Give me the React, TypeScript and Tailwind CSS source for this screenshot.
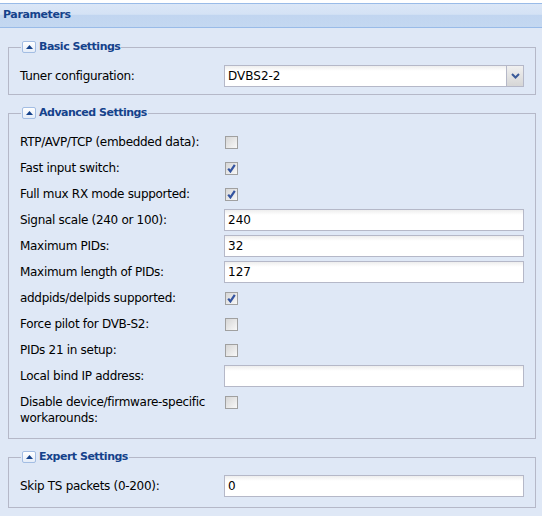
import React from 'react'

const font = { fontFamily: '"DejaVu Sans", Verdana, sans-serif' }

type Row =
  | { label: string; kind: 'check'; checked: boolean }
  | { label: string; kind: 'text'; value: string }

const advanced: Row[] = [
  { label: 'RTP/AVP/TCP (embedded data):', kind: 'check', checked: false },
  { label: 'Fast input switch:', kind: 'check', checked: true },
  { label: 'Full mux RX mode supported:', kind: 'check', checked: true },
  { label: 'Signal scale (240 or 100):', kind: 'text', value: '240' },
  { label: 'Maximum PIDs:', kind: 'text', value: '32' },
  { label: 'Maximum length of PIDs:', kind: 'text', value: '127' },
  { label: 'addpids/delpids supported:', kind: 'check', checked: true },
  { label: 'Force pilot for DVB-S2:', kind: 'check', checked: false },
  { label: 'PIDs 21 in setup:', kind: 'check', checked: false },
  { label: 'Local bind IP address:', kind: 'text', value: '' },
  { label: 'Disable device/firmware-specific workarounds:', kind: 'check', checked: false }
]

function Toggle() {
  return (
    <span className="flex h-[12px] w-[14px] items-center justify-center rounded-[2px] border border-[#a3bde3] bg-[linear-gradient(to_bottom,#ffffff,#e4ecf8)]">
      <svg width="7" height="4" viewBox="0 0 7 4">
        <path d="M0 4 L3.5 0 L7 4 Z" fill="#15428b" />
      </svg>
    </span>
  )
}

function FieldSet({ title, pb, children }: { title: string; pb: string; children: React.ReactNode }) {
  return (
    <fieldset className={`border border-[#b5b8c8] pl-[11px] pr-[11px] pt-[11px] ${pb}`}>
      <legend className="ml-[1px] flex h-[14px] items-center gap-[3px] px-[1px]">
        <Toggle />
        <span className="text-[11px] font-bold leading-[14px] text-[#15428b]" style={{ letterSpacing: '-0.5px' }}>
          {title}
        </span>
      </legend>
      <div className="flex flex-col gap-[4px]">{children}</div>
    </fieldset>
  )
}

function Label({ text }: { text: string }) {
  return (
    <div className="w-[204px] shrink-0 pr-[8px] pt-[3px] text-[12px] leading-[16px] tracking-[-0.3px] text-black">{text}</div>
  )
}

function TextBox({ value }: { value: string }) {
  return (
    <div className="flex h-[22px] w-[300px] items-center border border-[#b5b8c8] bg-[linear-gradient(to_bottom,#eeeeee,#ffffff_5px,#ffffff)] px-[3px] text-[12px] text-black">
      {value}
    </div>
  )
}

function Check({ checked }: { checked: boolean }) {
  return (
    <div className="flex h-[22px] items-center pl-[1px]">
      <div className="flex h-[13px] w-[13px] items-center justify-center border border-[#a0a0a0] bg-[linear-gradient(135deg,#d6d6d6,#f8f8f8)]">
        {checked && (
          <svg width="9" height="9" viewBox="0 0 9 9">
            <path d="M1.2 4.6 L3.4 7.4 L7.8 0.8" stroke="#3454a0" strokeWidth="2.2" fill="none" />
          </svg>
        )}
      </div>
    </div>
  )
}

function Combo({ value }: { value: string }) {
  return (
    <div className="flex h-[22px] w-[300px] border border-[#b5b8c8] bg-white">
      <div className="flex flex-1 items-center bg-[linear-gradient(to_bottom,#eeeeee,#ffffff_5px,#ffffff)] px-[3px] text-[12px] text-black">
        {value}
      </div>
      <div className="flex w-[17px] items-center justify-center border-l border-[#b5b8c8] bg-[linear-gradient(to_bottom,#f0f0f0,#d6d6d6)]">
        <svg width="9" height="6" viewBox="0 0 9 6">
          <path d="M1 1 L4.5 4.5 L8 1" stroke="#3a5a99" strokeWidth="2" fill="none" />
        </svg>
      </div>
    </div>
  )
}

export default function App() {
  return (
    <div className="h-[516px] w-[542px] overflow-hidden bg-white pt-[3px]" style={font}>
      <div className="flex h-[25px] items-center border-y border-[#99bbe8] bg-[linear-gradient(to_bottom,#dbe7f7_0%,#d4e2f5_45%,#c1d5f0_48%,#c4d8f1_100%)] pl-[3px]">
        <span className="text-[11px] font-bold text-[#15428b]" style={{ letterSpacing: '-0.4px' }}>Parameters</span>
      </div>
      <div className="flex h-full flex-col gap-[11px] bg-[#dfe8f6] pl-[8px] pr-[6px] pt-[12px]">
        <FieldSet title="Basic Settings" pb="pb-[7px]">
          <div className="flex">
            <Label text="Tuner configuration:" />
            <Combo value="DVBS2-2" />
          </div>
        </FieldSet>
        <FieldSet title="Advanced Settings" pb="pb-[12px]">
          {advanced.map((r) => (
            <div key={r.label} className="flex">
              <Label text={r.label} />
              {r.kind === 'check' ? <Check checked={r.checked} /> : <TextBox value={r.value} />}
            </div>
          ))}
        </FieldSet>
        <FieldSet title="Expert Settings" pb="pb-[10px]">
          <div className="flex">
            <Label text="Skip TS packets (0-200):" />
            <TextBox value="0" />
          </div>
        </FieldSet>
      </div>
    </div>
  )
}
